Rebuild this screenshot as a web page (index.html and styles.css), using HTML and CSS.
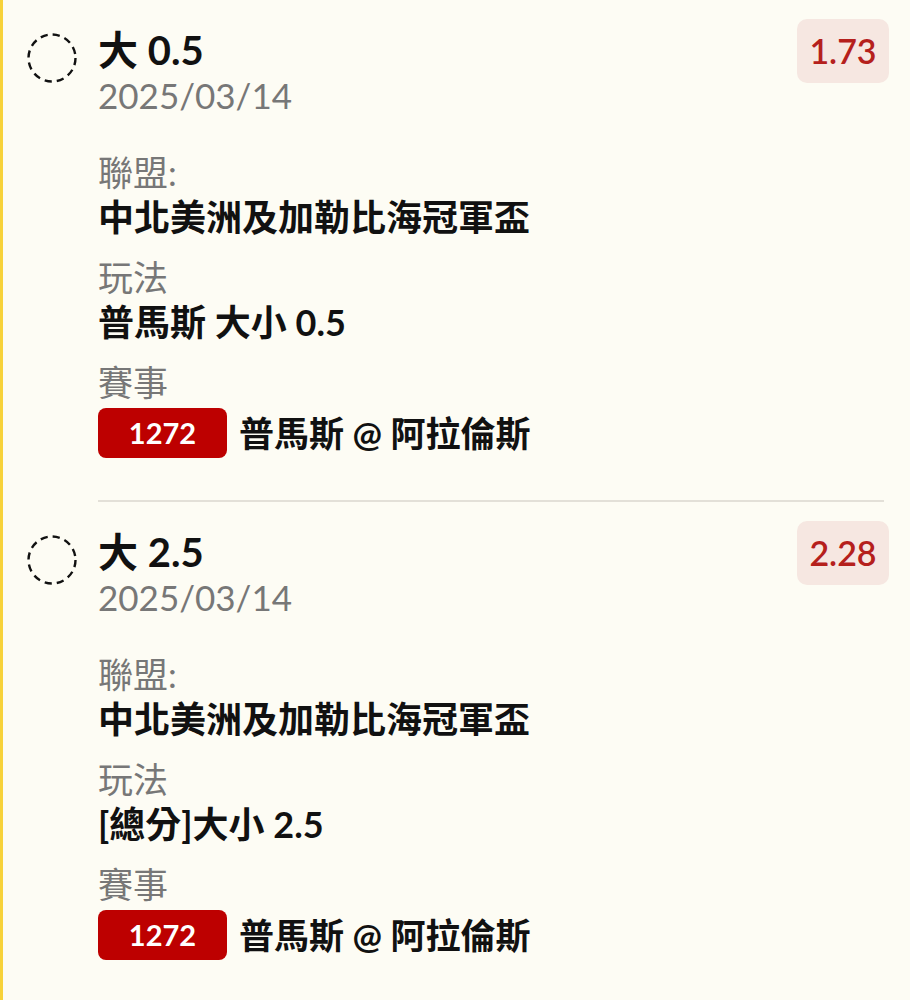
FILE: index.html
```html
<!DOCTYPE html>
<html lang="zh-Hant">
<head>
    <meta charset="UTF-8">
    <meta name="viewport" content="width=device-width, initial-scale=1.0">
    <title>投注記錄</title>
    <link rel="stylesheet" href="styles.css">
</head>
<body>
    <div class="bet-list">
        <div class="bet">
            <div class="status">
                <svg width="50" height="50" viewBox="0 0 50 50">
                    <circle cx="25" cy="25" r="23.5" fill="none" stroke="#111" stroke-width="2.4" stroke-dasharray="7.2 5.1"/>
                </svg>
            </div>
            <div class="bet-body">
                <div class="bet-title">大 0.5</div>
                <div class="bet-date">2025/03/14</div>
                <div class="field first">
                    <div class="field-label">聯盟:</div>
                    <div class="field-value">中北美洲及加勒比海冠軍盃</div>
                </div>
                <div class="field">
                    <div class="field-label">玩法</div>
                    <div class="field-value">普馬斯 大小 0.5</div>
                </div>
                <div class="field">
                    <div class="field-label">賽事</div>
                    <div class="match">
                        <span class="match-no">1272</span>
                        <span class="match-name">普馬斯 @ 阿拉倫斯</span>
                    </div>
                </div>
            </div>
            <div class="odds">1.73</div>
        </div>
        <div class="divider"></div>
        <div class="bet">
            <div class="status">
                <svg width="50" height="50" viewBox="0 0 50 50">
                    <circle cx="25" cy="25" r="23.5" fill="none" stroke="#111" stroke-width="2.4" stroke-dasharray="7.2 5.1"/>
                </svg>
            </div>
            <div class="bet-body">
                <div class="bet-title">大 2.5</div>
                <div class="bet-date">2025/03/14</div>
                <div class="field first">
                    <div class="field-label">聯盟:</div>
                    <div class="field-value">中北美洲及加勒比海冠軍盃</div>
                </div>
                <div class="field">
                    <div class="field-label">玩法</div>
                    <div class="field-value">[總分]大小 2.5</div>
                </div>
                <div class="field">
                    <div class="field-label">賽事</div>
                    <div class="match">
                        <span class="match-no">1272</span>
                        <span class="match-name">普馬斯 @ 阿拉倫斯</span>
                    </div>
                </div>
            </div>
            <div class="odds">2.28</div>
        </div>
    </div>
</body>
</html>
```

FILE: styles.css
```css
body {
    margin: 0;
    font-family: Lato, "Noto Sans CJK TC", sans-serif;
    background-color: #fdfcf4;
    color: #111;
}
.bet-list {
    min-height: 1000px;
    border-left: 3px solid #f7d23a;
    box-sizing: border-box;
}
.bet {
    display: flex;
    align-items: flex-start;
    padding: 19px 21px 42px 24px;
}
.status {
    width: 50px;
    height: 50px;
    margin-top: 14px;
    margin-right: 21px;
}
.status svg {
    display: block;
}
.bet-body {
    flex: 1;
    padding-top: 9px;
}
.bet-title {
    font-size: 40px;
    font-weight: bold;
    line-height: 45px;
}
.bet-date {
    font-size: 35px;
    line-height: 45px;
    color: #777;
}
.field {
    margin-top: 15px;
}
.field.first {
    margin-top: 32px;
}
.field-label {
    font-size: 35px;
    line-height: 45px;
    color: #777;
}
.field-value {
    font-size: 36px;
    font-weight: bold;
    line-height: 45px;
}
.match {
    display: flex;
    align-items: center;
    gap: 12px;
    margin-top: 3px;
}
.match-no {
    width: 129px;
    height: 50px;
    line-height: 50px;
    text-align: center;
    background-color: #bd0000;
    color: #fff;
    font-size: 29px;
    font-weight: bold;
    border-radius: 8px;
}
.match-name {
    font-size: 35px;
    font-weight: bold;
    line-height: 45px;
}
.odds {
    width: 92px;
    height: 64px;
    line-height: 64px;
    text-align: center;
    background-color: #f6e7e1;
    color: #b5201c;
    font-size: 34px;
    font-weight: 600;
    border-radius: 10px;
}
.divider {
    height: 2px;
    margin: 0 26px 0 95px;
    background-color: #e3e0d8;
}
```
